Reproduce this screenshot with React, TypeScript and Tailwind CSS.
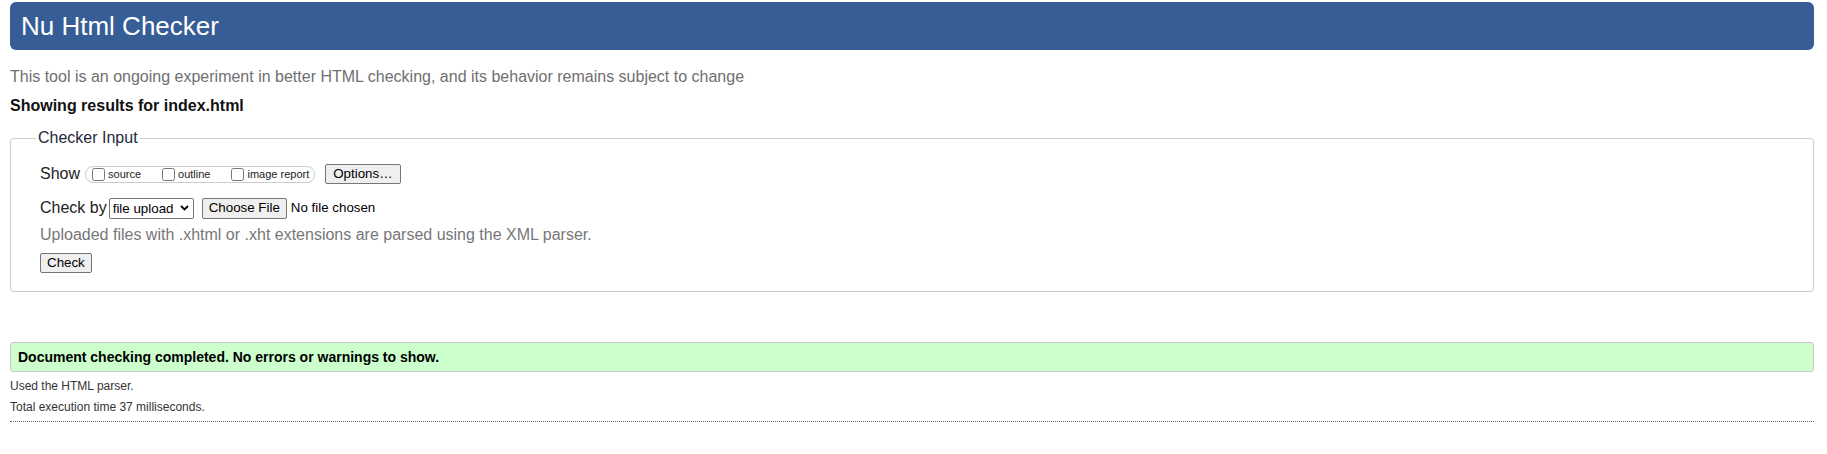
import React from 'react';

export default function App() {
  const showOptions = ['source', 'outline', 'image report'];

  return (
    <div className="min-h-[454px] bg-white font-['Liberation_Sans',Arial,sans-serif] text-[#222] pt-[2px] pl-[10px] pr-[13px]">
      {/* Header */}
      <header className="h-[48px] rounded-[6px] bg-[#365d95] flex items-center pl-[11px]">
        <h1 className="text-[26px] leading-[30px] text-white">Nu Html Checker</h1>
      </header>

      <p className="mt-[18px] text-[16px] leading-[18px] text-[#6f6f6f]">
        This tool is an ongoing experiment in better HTML checking, and its behavior remains subject to change
      </p>
      <p className="mt-[11px] text-[16px] leading-[18px] font-bold text-[#111]">Showing results for index.html</p>

      {/* Checker Input */}
      <fieldset className="mt-[14px] border border-[#cccccc] rounded-[4px] pl-[29px] pr-4 pb-[17px]">
        <legend className="-ml-[4px] px-[2px] text-[16px] leading-[18px] text-[#1e2a3a]">Checker Input</legend>

        <div className="mt-[17px] flex items-center h-[20px] text-[16px]">
          <span className="text-[#222]">Show</span>
          <div className="ml-[5px] h-[17px] flex items-center border border-[#cccccc] rounded-[8px] pl-[2px] pr-[5px]">
            {showOptions.map((opt, i) => (
              <label key={opt} className={`flex items-center text-[11px] leading-[13px] ${i > 0 ? 'ml-[17px]' : ''}`}>
                <input type="checkbox" className="m-[3px_3px_3px_4px] w-[13px] h-[13px]" />
                <span>{opt}</span>
              </label>
            ))}
          </div>
          <button className="ml-[10px] h-[20px] px-[7px] border border-[#767676] bg-[#efefef] rounded-[2px] text-[13.33px] leading-[16px] text-black">
            Options…
          </button>
        </div>

        <div className="mt-[13px] flex items-center h-[22px] text-[16px]">
          <span className="text-[#222]">Check by</span>
          <div className="relative ml-[2px] flex items-center">
            <select className="appearance-none h-[21px] w-[85px] pl-[3px] border border-[#767676] rounded-[2px] bg-white text-[13.33px] text-black">
              <option>file upload</option>
            </select>
            <svg className="absolute right-[5px] pointer-events-none" width="9" height="6" viewBox="0 0 9 6">
              <path d="M1 1l3.5 3.5L8 1" fill="none" stroke="#000" strokeWidth="1.8" />
            </svg>
          </div>
          <button className="ml-[8px] h-[21px] px-[6px] border border-[#767676] bg-[#efefef] rounded-[2px] text-[13.33px] leading-[16px] text-black">
            Choose File
          </button>
          <span className="ml-[4px] text-[13.33px] text-black">No file chosen</span>
        </div>

        <p className="mt-[7px] text-[16px] leading-[18px] text-[#777]">
          Uploaded files with .xhtml or .xht extensions are parsed using the XML parser.
        </p>

        <button className="mt-[9px] h-[20px] px-[6px] border border-[#767676] bg-[#efefef] rounded-[2px] text-[13.33px] leading-[16px] text-black">
          Check
        </button>
      </fieldset>

      {/* Result */}
      <div className="mt-[50px] h-[30px] flex items-center border border-[#c8c8c8] rounded-[3px] bg-[#ccffcc] pl-[7px]">
        <p className="text-[14px] font-bold text-black">Document checking completed. No errors or warnings to show.</p>
      </div>

      <div className="text-[12px] leading-[14px] text-[#333]">
        <p className="mt-[7px]">Used the HTML parser.</p>
        <p className="mt-[7px]">Total execution time 37 milliseconds.</p>
      </div>
      <div className="mt-[7px] border-b border-dotted border-[#666]" />
    </div>
  );
}
